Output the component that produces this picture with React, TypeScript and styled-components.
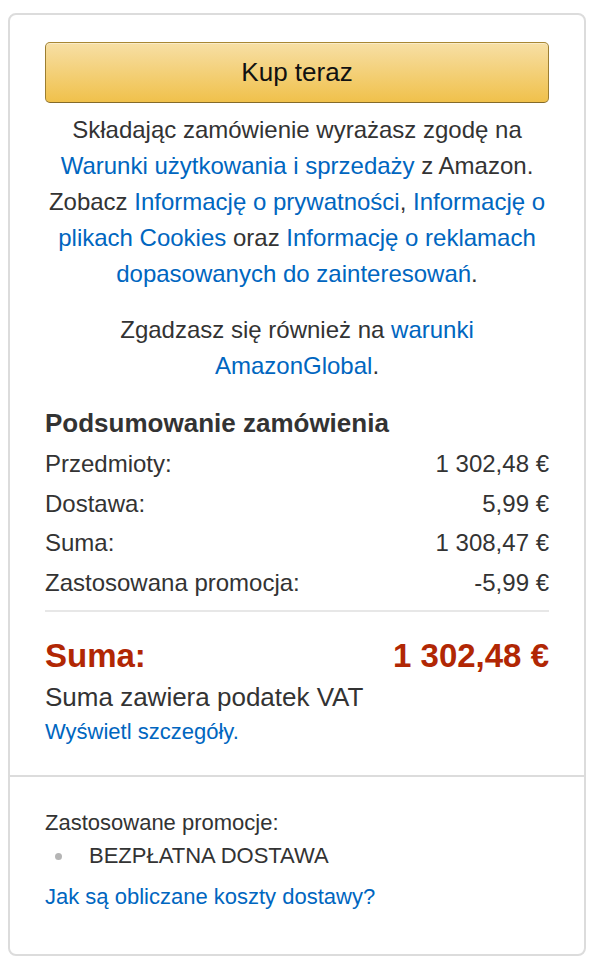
import React from "react";
import styled, { createGlobalStyle } from "styled-components";

const GlobalStyle = createGlobalStyle`
  html, body {
    margin: 0;
    padding: 0;
    background: #fff;
  }
  body {
    font-family: "Liberation Sans", Arial, Helvetica, sans-serif;
    color: #333;
  }
`;

const Card = styled.div`
  margin: 13px 12px 12px 8px;
  border: 2px solid #dcdcdc;
  border-radius: 8px;
  background: #fff;
`;

const Section = styled.div<{ $top?: boolean }>`
  padding: ${p => (p.$top ? "27px 35px 28px" : "31px 35px 42px")};
  & + & {
    border-top: 2px solid #dcdcdc;
  }
`;

const BuyButton = styled.button`
  display: block;
  width: 100%;
  height: 61px;
  border: 1px solid;
  border-color: #a88734 #9c7e31 #846a29;
  border-radius: 5px;
  background: linear-gradient(to bottom, #f7dfa5, #f0c14b);
  box-shadow: inset 0 1px 0 rgba(255, 255, 255, 0.4);
  font-family: inherit;
  font-size: 26px;
  color: #111;
  cursor: pointer;
`;

const Legal = styled.p<{ $gap: number }>`
  margin: ${p => p.$gap}px 0 0;
  font-size: 24px;
  line-height: 36px;
  text-align: center;
`;

const Link = styled.a`
  color: #0066c0;
  text-decoration: none;
`;

const Heading = styled.h2`
  margin: 23px 0 0;
  font-size: 26px;
  line-height: 32px;
  font-weight: 700;
  color: #333;
`;

const Rows = styled.div`
  margin-top: 5px;
  padding-bottom: 8px;
  border-bottom: 2px solid #e7e7e7;
`;

const Row = styled.div`
  display: flex;
  justify-content: space-between;
  font-size: 24px;
  line-height: 39.5px;
`;

const TotalRow = styled.div`
  display: flex;
  justify-content: space-between;
  margin-top: 24px;
  font-size: 33px;
  line-height: 40px;
  font-weight: 700;
  color: #b12704;
`;

const Note = styled.div`
  margin-top: 5px;
  font-size: 26px;
  line-height: 32px;
`;

const SmallLine = styled.div<{ $gap?: number }>`
  margin-top: ${p => p.$gap ?? 0}px;
  font-size: 22px;
  line-height: 30px;
`;

const PromoList = styled.ul`
  list-style: none;
  margin: 3px 0 0;
  padding: 0 0 0 10px;
`;

const PromoItem = styled.li`
  display: flex;
  align-items: center;
  gap: 27px;
  font-size: 22px;
  line-height: 30px;
`;

const Dot = styled.span`
  width: 7px;
  height: 7px;
  border-radius: 50%;
  background: #b5b5b5;
`;

const summary = [
  { label: "Przedmioty:", value: "1 302,48 €" },
  { label: "Dostawa:", value: "5,99 €" },
  { label: "Suma:", value: "1 308,47 €" },
  { label: "Zastosowana promocja:", value: "-5,99 €" },
];

export default function App() {
  return (
    <>
      <GlobalStyle />
      <Card>
        <Section $top>
          <BuyButton>Kup teraz</BuyButton>
          <Legal $gap={9}>
            Składając zamówienie wyrażasz zgodę na{" "}
            <Link href="#">Warunki użytkowania i sprzedaży</Link> z Amazon.
            Zobacz <Link href="#">Informację o prywatności</Link>,{" "}
            <Link href="#">Informację o plikach Cookies</Link> oraz{" "}
            <Link href="#">
              Informację o reklamach dopasowanych do zainteresowań
            </Link>
            .
          </Legal>
          <Legal $gap={20}>
            Zgadzasz się również na{" "}
            <Link href="#">warunki AmazonGlobal</Link>.
          </Legal>
          <Heading>Podsumowanie zamówienia</Heading>
          <Rows>
            {summary.map(r => (
              <Row key={r.label}>
                <span>{r.label}</span>
                <span>{r.value}</span>
              </Row>
            ))}
          </Rows>
          <TotalRow>
            <span>Suma:</span>
            <span>1 302,48 €</span>
          </TotalRow>
          <Note>Suma zawiera podatek VAT</Note>
          <SmallLine $gap={4}>
            <Link href="#">Wyświetl szczegóły.</Link>
          </SmallLine>
        </Section>
        <Section>
          <SmallLine>Zastosowane promocje:</SmallLine>
          <PromoList>
            <PromoItem>
              <Dot />
              BEZPŁATNA DOSTAWA
            </PromoItem>
          </PromoList>
          <SmallLine $gap={11}>
            <Link href="#">Jak są obliczane koszty dostawy?</Link>
          </SmallLine>
        </Section>
      </Card>
    </>
  );
}
